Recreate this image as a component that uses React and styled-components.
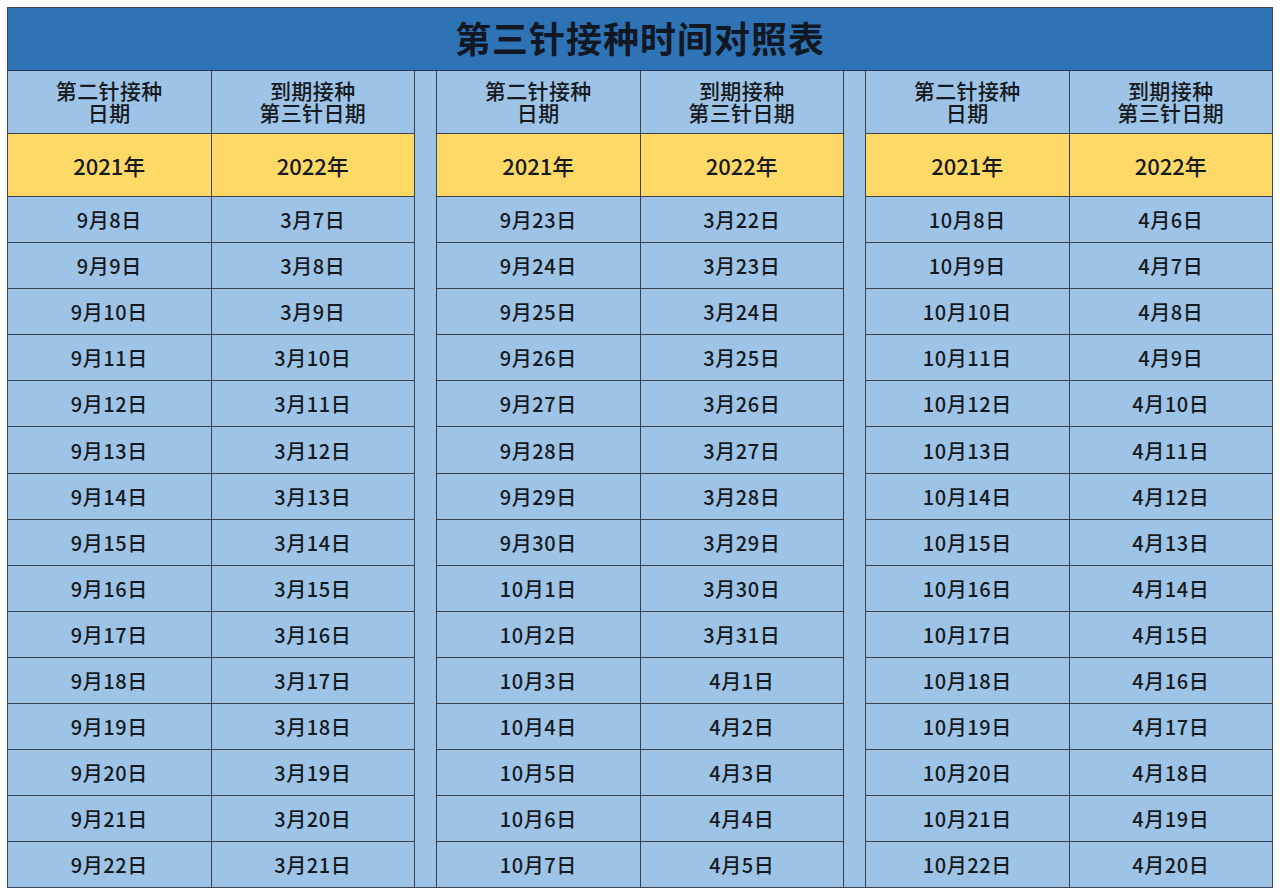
import React from "react";
import styled, { createGlobalStyle } from "styled-components";

const GlobalStyle = createGlobalStyle`
    html, body {
        margin: 0;
        padding: 0;
        background: #ffffff;
    }
    body {
        font-family: "Noto Sans CJK SC", "Noto Sans", sans-serif;
        color: #161a20;
    }
`;

const Page = styled.div`
    width: 1280px;
    height: 895px;
    padding: 7px 7px 0 7px;
    box-sizing: border-box;
`;

const Sheet = styled.div`
    display: flex;
    flex-direction: column;
    width: 1266px;
    border: 1px solid #3d4654;
    box-sizing: border-box;
`;

const TitleBar = styled.div`
    height: 63px;
    padding-bottom: 5px;
    box-sizing: border-box;
    display: flex;
    align-items: center;
    justify-content: center;
    background: #2e73b6;
    border-bottom: 1px solid #2b3a4f;
    font-size: 36px;
    font-weight: 700;
    letter-spacing: 1px;
    color: #111823;
`;

const Body = styled.div`
    display: grid;
    grid-template-columns: 1fr 1fr 21px 1fr 1fr 21px 1fr 1fr;
    grid-template-rows: 62px 62px repeat(15, 45.1px);
    gap: 1px;
    background: #39414f;
`;

const Cell = styled.div`
    display: flex;
    align-items: center;
    justify-content: center;
    text-align: center;
    background: ${(p) => (p.$year ? "#ffd966" : "#9dc3e6")};
    font-size: ${(p) => (p.$year ? "22px" : "20px")};
    font-weight: 500;
    letter-spacing: ${(p) => (p.$year ? "0" : "0.6px")};
`;

const HeadCell = styled(Cell)`
    flex-direction: column;
    font-size: 21px;
    letter-spacing: 0.4px;
    padding-bottom: 3px;
`;

const HeadLine = styled.span`
    display: block;
    line-height: 22px;
`;

const Spacer = styled.div`
    grid-row: 1 / -1;
    grid-column: ${(p) => p.$col};
    background: #9dc3e6;
`;

const fmt = (m, d) => `${m}月${d}日`;

function buildColumn(startMonth, startDay, monthLen, count) {
    const out = [];
    let m = startMonth;
    let d = startDay;
    for (let i = 0; i < count; i++) {
        out.push(fmt(m, d));
        d += 1;
        if (d > monthLen[m]) {
            d = 1;
            m += 1;
        }
    }
    return out;
}

const days = { 3: 31, 4: 30, 9: 30, 10: 31 };

const groups = [
    { second: buildColumn(9, 8, days, 15), third: buildColumn(3, 7, days, 15) },
    { second: buildColumn(9, 23, days, 15), third: buildColumn(3, 22, days, 15) },
    { second: buildColumn(10, 8, days, 15), third: buildColumn(4, 6, days, 15) },
];

const colStart = [1, 4, 7];

export default function App() {
    return (
        <Page>
            <GlobalStyle />
            <Sheet>
                <TitleBar>第三针接种时间对照表</TitleBar>
                <Body>
                    <Spacer $col={3} />
                    <Spacer $col={6} />
                    {groups.map((g, gi) => {
                        const c = colStart[gi];
                        const cells = [
                            <HeadCell key={`h1-${gi}`} style={{ gridColumn: c, gridRow: 1 }}>
                                <HeadLine>第二针接种</HeadLine>
                                <HeadLine>日期</HeadLine>
                            </HeadCell>,
                            <HeadCell key={`h2-${gi}`} style={{ gridColumn: c + 1, gridRow: 1 }}>
                                <HeadLine>到期接种</HeadLine>
                                <HeadLine>第三针日期</HeadLine>
                            </HeadCell>,
                            <Cell $year key={`y1-${gi}`} style={{ gridColumn: c, gridRow: 2 }}>
                                2021年
                            </Cell>,
                            <Cell $year key={`y2-${gi}`} style={{ gridColumn: c + 1, gridRow: 2 }}>
                                2022年
                            </Cell>,
                        ];
                        g.second.forEach((s, i) => {
                            cells.push(
                                <Cell key={`a-${gi}-${i}`} style={{ gridColumn: c, gridRow: i + 3 }}>
                                    {s}
                                </Cell>
                            );
                            cells.push(
                                <Cell key={`b-${gi}-${i}`} style={{ gridColumn: c + 1, gridRow: i + 3 }}>
                                    {g.third[i]}
                                </Cell>
                            );
                        });
                        return cells;
                    })}
                </Body>
            </Sheet>
        </Page>
    );
}
